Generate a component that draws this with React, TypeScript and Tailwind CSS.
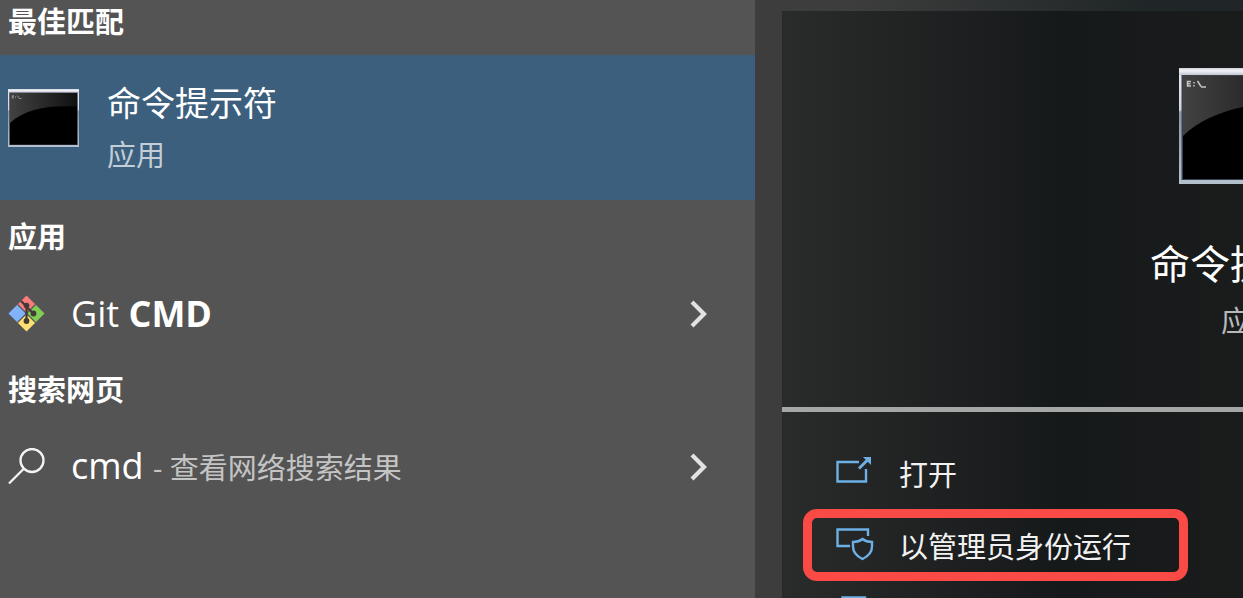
import type { ReactNode } from 'react';

function ConsoleIcon({ className, large = false }: { className: string; large?: boolean }) {
  const id = large ? 'console-large' : 'console-small';
  return (
    <svg className={className} viewBox="0 0 142 116" preserveAspectRatio="none" aria-hidden="true">
      <defs>
        <linearGradient id={`${id}-bar`} x1="0" y1="0" x2="0" y2="1">
          <stop offset="0" stopColor="#cfd3dd" />
          <stop offset="0.4" stopColor="#f1f2f6" />
          <stop offset="1" stopColor="#c2c7d3" />
        </linearGradient>
        <linearGradient id={`${id}-frame`} x1="0" y1="0" x2="0" y2="1">
          <stop offset="0" stopColor="#e6e8ee" />
          <stop offset="0.36" stopColor="#d5d8e0" />
          <stop offset="0.38" stopColor="#8b98ac" />
          <stop offset="1" stopColor="#b4bfce" />
        </linearGradient>
        <linearGradient id={`${id}-gloss`} x1="0" y1="0" x2="1" y2="0">
          <stop offset="0" stopColor="#424242" />
          <stop offset="1" stopColor="#101010" />
        </linearGradient>
      </defs>
      <rect width="142" height="116" fill={`url(#${id}-frame)`} />
      <rect width="142" height="7" fill={`url(#${id}-bar)`} />
      <rect x="2.5" y="7" width="137" height="105" fill="#39414d" />
      <rect x="4" y="8" width="134" height="103" fill="#000" />
      <path d="M4 8H138V35C84 32 34 39 4 68Z" fill={`url(#${id}-gloss)`} />
      <g stroke="#c4c4c4" strokeWidth={large ? 1.5 : 1.2} fill="none">
        <path d="M12 13.500H8.500V18H12M9 15.700H11.500M15 14V15.500M15 17V18.500M18.500 13L22 18.500M22 19H27" />
      </g>
    </svg>
  );
}

function GitIcon() {
  return (
    <svg className="size-[37px] shrink-0" viewBox="0 0 37 37" aria-hidden="true">
      <path d="M18.500 .5L27.500 9.500L18.500 18.500L9.500 9.500Z" fill="#f97b7b" />
      <path d="M27.500 9.500L36.500 18.500L27.500 27.500L18.500 18.500Z" fill="#80cf54" />
      <path d="M18.500 18.500L27.500 27.500L18.500 36.500L9.500 27.500Z" fill="#ffe173" />
      <path d="M9.500 9.500L18.500 18.500L9.500 27.500L.5 18.500Z" fill="#80b3fa" />
      <path d="M9.500 9.500L27.500 27.500M27.500 9.500L9.500 27.500" stroke="#555" strokeWidth="1.200" />
      <g stroke="#413b38" strokeWidth="2.200" fill="none">
        <path d="M13 6L18.500 11.500V27M18.500 12L25.500 18.500" />
      </g>
      <g fill="#413b38">
        <circle cx="18.500" cy="10.500" r="2.800" />
        <circle cx="25.500" cy="18.500" r="2.900" />
        <circle cx="18.500" cy="26" r="2.900" />
      </g>
    </svg>
  );
}

function SearchIcon() {
  return (
    <svg className="size-[37px] shrink-0" viewBox="0 0 37 37" fill="none" stroke="#f4f4f4" strokeWidth="2.300" aria-hidden="true">
      <circle cx="24" cy="12.500" r="11.500" />
      <path d="M16 20.500L1 35.500" />
    </svg>
  );
}

function Chevron() {
  return (
    <svg className="h-[28px] w-[18px] shrink-0" viewBox="0 0 18 28" fill="none" stroke="#e2e2e2" strokeWidth="4.200" aria-hidden="true">
      <path d="M2 2L14 14L2 26" />
    </svg>
  );
}

function OpenIcon() {
  return (
    <svg className="h-[36px] w-[37px]" viewBox="0 0 37 36" fill="none" stroke="#6cb0e6" strokeWidth="2.400" aria-hidden="true">
      <path d="M23 7H1.500V26.500H30V14" />
      <path d="M23 13.500L32 4.500" strokeWidth="3" />
      <path d="M27 2H35V10Z" fill="#6cb0e6" stroke="none" />
    </svg>
  );
}

function AdminIcon() {
  return (
    <svg className="h-[36px] w-[38px]" viewBox="0 0 38 36" fill="none" stroke="#6cb0e6" strokeWidth="2.400" aria-hidden="true">
      <path d="M14 19H1.500V2.500H32V9" />
      <path d="M26.500 12C24 14 20.500 15 17 15V19.500C17 25.500 20.500 29 26.500 32C32.500 29 36 25.500 36 19.500V15C32.500 15 29 14 26.500 12Z" />
    </svg>
  );
}

function FileLocationIcon() {
  return (
    <svg className="h-[42px] w-[37px]" viewBox="0 0 37 42" fill="none" stroke="#6cb0e6" strokeWidth="2.400" aria-hidden="true">
      <path d="M6.500 38V1.500H29V38Z" />
    </svg>
  );
}

function SectionTitle({ children }: { children: ReactNode }) {
  return <h2 className="px-2 text-[29px] leading-[44px] font-bold text-white">{children}</h2>;
}

function ResultRow({ icon, children }: { icon: ReactNode; children: ReactNode }) {
  return (
    <button type="button" className="flex h-[109px] w-full items-center pr-[47px] pl-2 text-left">
      {icon}
      <span className="ml-[26px] flex-1 text-[36px] leading-[48px] whitespace-nowrap text-white">{children}</span>
      <Chevron />
    </button>
  );
}

function Action({ icon, label, highlighted = false, children }: { icon: ReactNode; label?: string; highlighted?: boolean; children?: ReactNode }) {
  return (
    <button
      type="button"
      aria-label={label}
      className={`flex h-[72px] w-fit items-center rounded-[14px] border-[9px] pr-[48px] pl-6 ${highlighted ? 'border-[#f94a46]' : 'border-transparent'}`}
    >
      <span className="flex w-[38px] justify-start">{icon}</span>
      <span className="ml-[25px] pt-[3px] text-[29px] leading-[40px] whitespace-nowrap text-[#f2f2f2]">{children}</span>
    </button>
  );
}

export default function App() {
  return (
    <div className="flex h-screen overflow-hidden bg-[#3d3d3d] font-['Open_Sans','Noto_Sans_CJK_SC',sans-serif]">
      <main className="min-w-0 flex-1 bg-[#545454]">
        <SectionTitle>最佳匹配</SectionTitle>
        <button type="button" className="mt-[11px] mb-[15px] flex h-[145px] w-full items-start bg-[#3c5f7d] pt-[22px] pl-2 text-left">
          <ConsoleIcon className="mt-[12px] h-[58px] w-[71px] shrink-0" />
          <span className="ml-7 flex flex-col">
            <span className="text-[34px] leading-[52px] text-white">命令提示符</span>
            <span className="text-[29px] leading-[52px] text-[#c3ced8]">应用</span>
          </span>
        </button>
        <SectionTitle>应用</SectionTitle>
        <ResultRow icon={<GitIcon />}>
          Git <strong className="font-bold">CMD</strong>
        </ResultRow>
        <SectionTitle>搜索网页</SectionTitle>
        <ResultRow icon={<SearchIcon />}>
          cmd <span className="text-[29px] text-[#c4c4c4]">- 查看网络搜索结果</span>
        </ResultRow>
      </main>

      <aside className="w-[488px] shrink-0 overflow-hidden bg-linear-to-r from-[#3d3d3d] from-20% to-[#202627] to-80% pt-[11px]">
        <div className="flex h-full w-[963px]">
          <div className="w-[27px] shrink-0 bg-[#3d3d3d]" />
          <div className="flex-1 bg-linear-to-r from-[#2a2b2b] from-0% via-[#16191a] via-30% to-[#1a1c1c] to-50%">
            <header className="flex h-[396px] flex-col items-center pt-[57px]">
              <ConsoleIcon large className="h-[116px] w-[142px]" />
              <h1 className="mt-[50px] text-[40px] leading-[60px] text-white">命令提示符</h1>
              <p className="text-[29px] leading-[54px] text-[#b8b8b8]">应用</p>
            </header>
            <hr className="h-[5px] border-0 bg-[#a5a6a6]" />
            <div className="flex flex-col items-start pt-[25px] pl-[21px]">
              <Action icon={<OpenIcon />}>打开</Action>
              <Action icon={<AdminIcon />} highlighted>
                以管理员身份运行
              </Action>
              <Action icon={<FileLocationIcon />} label="打开文件位置" />
            </div>
          </div>
        </div>
      </aside>
    </div>
  );
}
